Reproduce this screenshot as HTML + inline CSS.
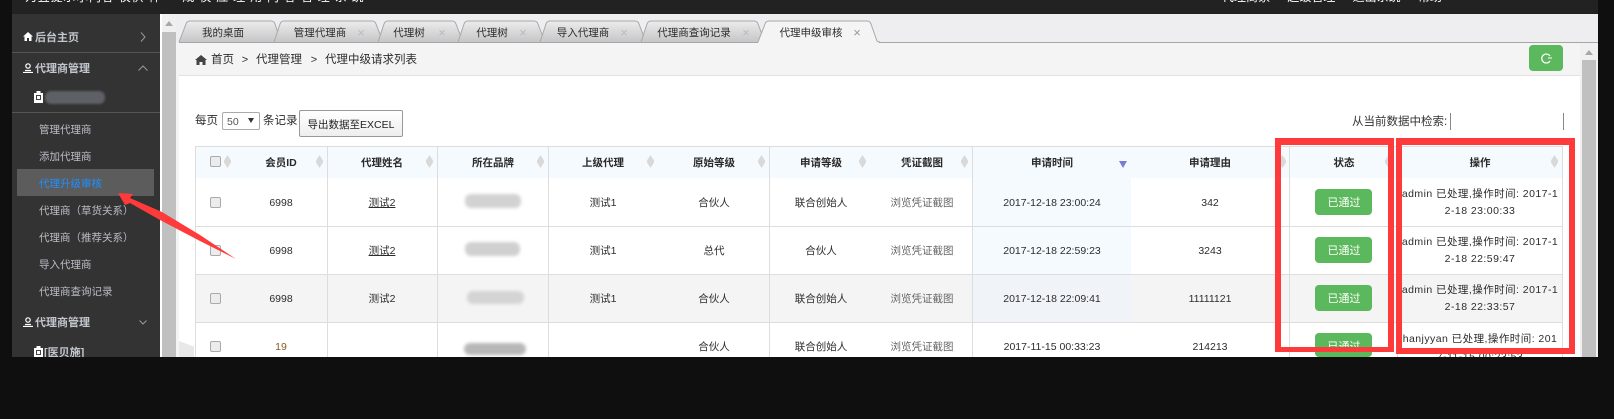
<!DOCTYPE html>
<html lang="zh"><head><meta charset="utf-8"><title>代理升级审核</title>
<style>
html,body{margin:0;padding:0;background:#0f0f0f}
body{position:relative;width:1614px;height:419px;overflow:hidden;font-family:"Liberation Sans","Noto Sans CJK SC",sans-serif;font-size:10.5px;color:#2c2c2c}
div,span,a,b{position:absolute}
.c{transform:translate(-50%,-50%);white-space:nowrap;line-height:14px;margin-top:.5px;filter:blur(.25px)}
.l{transform:translateY(-50%);white-space:nowrap;line-height:14px;margin-top:.5px;filter:blur(.25px)}
.m{color:#b9bcc4}
.h{font-weight:bold;font-size:11px;color:#c3c6ce}
.th{font-weight:bold;color:#2a2a2a;top:162px}
.s{top:155px;width:7px;height:13px;background:#d9d9d9;clip-path:polygon(50% 0,100% 42%,100% 58%,50% 100%,0 58%,0 42%)}
.cb{left:210px;width:9px;height:9px;border:1px solid #aaa;border-radius:2px;background:#ececec}
.g{width:57px;height:26px;left:1315px;background:#5cb85c;border-radius:4px}
.gt{left:1344px;color:#fff;font-size:11px}
.b{border-radius:6px;filter:blur(1.5px)}
.hl{left:195px;width:1368px;height:1px;background:#ddd}
.vl{top:146px;width:1px;height:211px;background:#ddd}
.o{left:1480px;letter-spacing:.45px;font-size:10.5px}
.rd{border-style:solid;border-color:#ff3a3a;box-sizing:border-box}
</style></head><body>
<div style="left:12px;top:0;width:1586px;height:14px;background:#222;overflow:hidden">
<span style="left:13px;top:-12px;color:#fff;font-size:12px;white-space:nowrap;letter-spacing:.8px">为宜提示尔内容 仅供 样 一 成 仅 应 理 用 内 容 管 理 系 统</span>
<span style="left:1210px;top:-12px;color:#fff;font-size:12px;white-space:nowrap;word-spacing:14px">代理商家 超级管理 退出系统 帮助</span>
</div>
<div style="left:12px;top:14px;width:148px;height:343px;background:#333"></div>
<div style="left:160px;top:14px;width:1438px;height:343px;background:#fff"></div>
<div style="left:162px;top:14px;width:14px;height:343px;background:#f0f0f0"></div>
<div style="left:162px;top:32px;width:14px;height:325px;background:#c0c0c0"></div>
<div style="left:165px;top:21px;width:0;height:0;border:4px solid transparent;border-top:0;border-bottom:5px solid #a8a8a8"></div>
<div style="left:176px;top:14px;width:3px;height:343px;background:#f4f4f4"></div>
<div style="left:179px;top:341px;width:15px;height:16px;background:#e8e8e8;clip-path:polygon(0 0,100% 35%,100% 100%,0 100%)"></div>

<!-- tabs -->
<div style="left:176px;top:14px;width:1422px;height:29px;background:#eeeef0"></div>
<svg style="position:absolute;left:0;top:0" width="1614" height="60">
<defs><linearGradient id="tg" x1="0" y1="0" x2="0" y2="1"><stop offset="0" stop-color="#ececec"/><stop offset="1" stop-color="#c6c6c8"/></linearGradient></defs>
<rect x="179" y="42" width="1419" height="1" fill="#a6a6a6"/>
<g fill="url(#tg)" stroke="#a8a8a8" stroke-width="1">
<path d="M179 42L186 24Q187 21 190 21L271 21Q274 21 275 24L281 42"/>
<path d="M274 42L280 24Q281 21 284 21L372 21Q375 21 376 24L383 42"/>
<path d="M378 42L384 24Q385 21 388 21L452 21Q455 21 456 24L463 42"/>
<path d="M458 42L464 24Q465 21 468 21L534 21Q537 21 538 24L545 42"/>
<path d="M540 42L546 24Q547 21 550 21L635 21Q638 21 639 24L646 42"/>
<path d="M641 42L647 24Q648 21 651 21L754 21Q757 21 758 24L765 42"/>
</g>
<path d="M758 43L765 24Q766 21 769 21L867 21Q870 21 871 24L879 43Z" fill="#f4f4f4"/>
<path d="M758 42L765 24Q766 21 769 21L867 21Q870 21 871 24L877 41Q878 42 880 42" fill="none" stroke="#a8a8a8"/>
</svg>
<div class="c" style="left:223px;top:32px">我的桌面</div>
<div class="c" style="left:320px;top:32px">管理代理商</div><div class="c" style="left:361px;top:32px;color:#bbb;font-size:13px">×</div>
<div class="c" style="left:409px;top:32px">代理树</div><div class="c" style="left:442px;top:32px;color:#bbb;font-size:13px">×</div>
<div class="c" style="left:492px;top:32px">代理树</div><div class="c" style="left:523px;top:32px;color:#bbb;font-size:13px">×</div>
<div class="c" style="left:583px;top:32px">导入代理商</div><div class="c" style="left:624px;top:32px;color:#bbb;font-size:13px">×</div>
<div class="c" style="left:694px;top:32px">代理商查询记录</div><div class="c" style="left:746px;top:32px;color:#bbb;font-size:13px">×</div>
<div class="c" style="left:811px;top:32px">代理申级审核</div><div class="c" style="left:857px;top:32px;color:#999;font-size:13px">×</div>

<!-- breadcrumb -->
<div style="left:179px;top:43px;width:1401px;height:32px;background:#f4f4f4"></div>
<div style="left:179px;top:75px;width:1401px;height:1px;background:#e2e2e2"></div>
<div style="left:1580px;top:43px;width:18px;height:314px;background:#f0f0f0"></div>
<div style="left:1582px;top:60px;width:14px;height:297px;background:#c0c0c0"></div>
<div style="left:1585px;top:50px;width:0;height:0;border:4px solid transparent;border-top:0;border-bottom:5px solid #a8a8a8"></div>
<svg style="position:absolute;left:195px;top:55px" width="12" height="10" viewBox="0 0 12 10"><path d="M6 0L12 5L10.500 5L10.500 10L7.500 10L7.500 7L4.500 7L4.500 10L1.500 10L1.500 5L0 5Z" fill="#444"/></svg>
<div class="l" style="left:211px;top:59px;font-size:11.500px">首页</div>
<div class="c" style="left:245px;top:59px;font-size:11px">&gt;</div>
<div class="l" style="left:256px;top:59px;font-size:11.500px">代理管理</div>
<div class="c" style="left:314px;top:59px;font-size:11px">&gt;</div>
<div class="l" style="left:325px;top:59px;font-size:11.500px">代理中级请求列表</div>
<div style="left:1529px;top:45px;width:34px;height:26px;background:#5cb85c;border-radius:4px"></div>
<svg style="position:absolute;left:1539px;top:53px" width="14" height="11" viewBox="0 0 14 11"><path d="M11 3A4.500 4.500 0 1 0 11 8" fill="none" stroke="#fff" stroke-width="1.200"/><path d="M9 5L13 5" stroke="#fff" stroke-width="1"/></svg>

<!-- toolbar -->
<div class="l" style="left:195px;top:120px;font-size:11.500px">每页</div>
<div style="left:222px;top:112px;width:36px;height:16px;border:1px solid #aaa;border-radius:2px;background:#fff"></div>
<div class="l" style="left:227px;top:121px;color:#555">50</div>
<div style="left:248px;top:118px;width:0;height:0;border:3px solid transparent;border-top:5px solid #333;border-bottom:0"></div>
<div class="l" style="left:263px;top:120px;font-size:11.500px">条记录</div>
<div style="left:299px;top:110px;width:104px;height:27px;box-sizing:border-box;border:1px solid #999;border-radius:2px;background:linear-gradient(#fff,#eee)"></div>
<div class="c" style="left:351px;top:124px;font-size:10.500px;color:#222">导出数据至EXCEL</div>
<div class="l" style="left:1352px;top:121px;font-size:11.500px;color:#333">从当前数据中检索:</div>
<div style="left:1450px;top:113px;width:1px;height:17px;background:#888"></div>
<div style="left:1563px;top:113px;width:1px;height:17px;background:#888"></div>

<!-- table -->
<div style="left:195px;top:146px;width:1368px;height:32px;background:#f5fafe"></div>
<div style="left:972px;top:178px;width:159px;height:144px;background:#f5fafe"></div>
<div style="left:195px;top:274px;width:1368px;height:48px;background:#f4f4f4"></div>
<div style="left:972px;top:274px;width:159px;height:48px;background:#f0f4f8"></div>
<div class="hl" style="top:146px"></div><div class="hl" style="top:226px"></div><div class="hl" style="top:274px"></div><div class="hl" style="top:322px"></div>
<div class="vl" style="left:195px"></div><div class="vl" style="left:327px"></div><div class="vl" style="left:437px"></div><div class="vl" style="left:548px"></div><div class="vl" style="left:769px"></div><div class="vl" style="left:972px"></div><div class="vl" style="left:1289px"></div><div class="vl" style="left:1397px"></div><div class="vl" style="left:1562px"></div>

<div class="cb" style="top:156px"></div><div class="cb" style="top:197px"></div><div class="cb" style="top:245px"></div><div class="cb" style="top:293px"></div><div class="cb" style="top:341px"></div>
<div class="s" style="left:224px"></div><div class="s" style="left:316px"></div><div class="s" style="left:426px"></div><div class="s" style="left:537px"></div><div class="s" style="left:647px"></div><div class="s" style="left:758px"></div><div class="s" style="left:859px"></div><div class="s" style="left:961px"></div><div class="s" style="left:1279px"></div><div class="s" style="left:1385px"></div><div class="s" style="left:1551px"></div>
<div style="left:1119px;top:161px;width:0;height:0;border:4px solid transparent;border-top:7px solid #7b7bd6;border-bottom:0"></div>

<div class="c th" style="left:281px">会员ID</div><div class="c th" style="left:382px">代理姓名</div><div class="c th" style="left:493px">所在品牌</div><div class="c th" style="left:603px">上级代理</div><div class="c th" style="left:714px">原始等级</div><div class="c th" style="left:821px">申请等级</div><div class="c th" style="left:922px">凭证截图</div><div class="c th" style="left:1052px">申请时间</div><div class="c th" style="left:1210px">申请理由</div><div class="c th" style="left:1344px">状态</div><div class="c th" style="left:1480px">操作</div>

<div class="c" style="left:281px;top:202px">6998</div><div class="c" style="left:382px;top:202px;text-decoration:underline">测试2</div><div class="c" style="left:603px;top:202px">测试1</div><div class="c" style="left:714px;top:202px">合伙人</div><div class="c" style="left:821px;top:202px">联合创始人</div><div class="c" style="left:922px;top:202px;color:#666">浏览凭证截图</div><div class="c" style="left:1052px;top:202px">2017-12-18 23:00:24</div><div class="c" style="left:1210px;top:202px">342</div>
<div class="c" style="left:281px;top:250px">6998</div><div class="c" style="left:382px;top:250px;text-decoration:underline">测试2</div><div class="c" style="left:603px;top:250px">测试1</div><div class="c" style="left:714px;top:250px">总代</div><div class="c" style="left:821px;top:250px">合伙人</div><div class="c" style="left:922px;top:250px;color:#666">浏览凭证截图</div><div class="c" style="left:1052px;top:250px">2017-12-18 22:59:23</div><div class="c" style="left:1210px;top:250px">3243</div>
<div class="c" style="left:281px;top:298px">6998</div><div class="c" style="left:382px;top:298px">测试2</div><div class="c" style="left:603px;top:298px">测试1</div><div class="c" style="left:714px;top:298px">合伙人</div><div class="c" style="left:821px;top:298px">联合创始人</div><div class="c" style="left:922px;top:298px;color:#666">浏览凭证截图</div><div class="c" style="left:1052px;top:298px">2017-12-18 22:09:41</div><div class="c" style="left:1210px;top:298px">11111121</div>
<div class="c" style="left:281px;top:346px;color:#8a5a1c">19</div><div class="c" style="left:714px;top:346px">合伙人</div><div class="c" style="left:821px;top:346px">联合创始人</div><div class="c" style="left:922px;top:346px;color:#666">浏览凭证截图</div><div class="c" style="left:1052px;top:346px">2017-11-15 00:33:23</div><div class="c" style="left:1210px;top:346px">214213</div>

<div class="b" style="left:465px;top:194px;width:56px;height:14px;background:#d2d2d2"></div>
<div class="b" style="left:465px;top:242px;width:55px;height:14px;background:#d0d0d0"></div>
<div class="b" style="left:467px;top:291px;width:57px;height:13px;background:#d4d4d4"></div>
<div class="b" style="left:464px;top:343px;width:62px;height:12px;background:#b8b8b8"></div>

<div class="g" style="top:189px"></div><div class="c gt" style="top:202px">已通过</div>
<div class="g" style="top:237px"></div><div class="c gt" style="top:250px">已通过</div>
<div class="g" style="top:285px"></div><div class="c gt" style="top:298px">已通过</div>
<div class="g" style="top:333px;height:24px"></div><div class="c gt" style="top:346px">已通过</div>

<div class="c o" style="top:193px">admin 已处理,操作时间: 2017-1</div><div class="c o" style="top:210px">2-18 23:00:33</div>
<div class="c o" style="top:241px">admin 已处理,操作时间: 2017-1</div><div class="c o" style="top:258px">2-18 22:59:47</div>
<div class="c o" style="top:289px">admin 已处理,操作时间: 2017-1</div><div class="c o" style="top:306px">2-18 22:33:57</div>
<div class="c o" style="top:338px">hanjyyan 已处理,操作时间: 201</div>
<div style="left:1398px;top:350px;width:164px;height:7px;overflow:hidden"><span class="c" style="left:82px;top:6px;letter-spacing:.45px">7-11-15 00:23:53</span></div>

<!-- sidebar -->
<svg style="position:absolute;left:23px;top:32px" width="10" height="9" viewBox="0 0 10 9"><path d="M5 0L10 4.500L8.500 4.500L8.500 9L6 9L6 6L4 6L4 9L1.500 9L1.500 4.500L0 4.500Z" fill="#fff"/></svg>
<div class="l h" style="left:35px;top:37px">后台主页</div>
<svg style="position:absolute;left:140px;top:32px" width="6" height="10"><path d="M1 .5L5 5L1 9.500" fill="none" stroke="#999"/></svg>
<div style="left:12px;top:52px;width:148px;height:1px;background:#555"></div>
<svg style="position:absolute;left:23px;top:63px" width="10" height="10" viewBox="0 0 10 10"><circle cx="5" cy="3" r="2.200" fill="none" stroke="#fff" stroke-width="1.200"/><path d="M0 9.500L10 9.500M2 7.500L8 7.500" stroke="#fff" stroke-width="1.200"/></svg>
<div class="l h" style="left:35px;top:68px">代理商管理</div>
<svg style="position:absolute;left:138px;top:65px" width="10" height="6"><path d="M.5 5.500L5 1L9.500 5.500" fill="none" stroke="#999"/></svg>
<svg style="position:absolute;left:34px;top:91px" width="9" height="12"><path d="M.5 2.500H8.500V11.500H.5ZM3 2.500V.5H6V2.500" fill="#fff" stroke="#fff"/><rect x="2.500" y="4.500" width="4" height="4" fill="none" stroke="#444"/></svg>
<div class="b" style="left:45px;top:91px;width:60px;height:13px;background:#5e6066;filter:blur(1px)"></div>
<div style="left:12px;top:112px;width:148px;height:1px;background:#555"></div>
<div class="l m" style="left:39px;top:129px">管理代理商</div>
<div class="l m" style="left:39px;top:156px">添加代理商</div>
<div style="left:17px;top:169px;width:137px;height:27px;background:#5c5c5c"></div>
<div class="l" style="left:39px;top:183px;color:#1e90ff">代理升级审核</div>
<div class="l m" style="left:39px;top:210px">代理商（草货关系）</div>
<div class="l m" style="left:39px;top:237px">代理商（推荐关系）</div>
<div class="l m" style="left:39px;top:264px">导入代理商</div>
<div class="l m" style="left:39px;top:291px">代理商查询记录</div>
<svg style="position:absolute;left:23px;top:317px" width="10" height="10" viewBox="0 0 10 10"><circle cx="5" cy="3" r="2.200" fill="none" stroke="#fff" stroke-width="1.200"/><path d="M0 9.500L10 9.500M2 7.500L8 7.500" stroke="#fff" stroke-width="1.200"/></svg>
<div class="l h" style="left:35px;top:322px">代理商管理</div>
<svg style="position:absolute;left:139px;top:320px" width="8" height="5"><path d="M.5 .5L4 4L7.500 .5" fill="none" stroke="#999"/></svg>
<svg style="position:absolute;left:34px;top:346px" width="9" height="12"><path d="M.5 2.500H8.500V11.500H.5ZM3 2.500V.5H6V2.500" fill="#fff" stroke="#fff"/><rect x="2.500" y="4.500" width="4" height="4" fill="none" stroke="#444"/></svg>
<div class="l h" style="left:44px;top:352px">[医贝施]</div>

<!-- annotations -->
<svg style="position:absolute;left:0;top:0" width="1614" height="419"><polygon points="118,193 133,194 130,198 162,212 200,235 236,259 200,241 160,220 130,203 125,205" fill="#ff3a3a"/></svg>
<div class="rd" style="left:1275px;top:138px;width:119px;height:214px;border-width:7px 6px 5px 6px"></div>
<div class="rd" style="left:1396px;top:138px;width:179px;height:216px;border-width:7px 6px 6px 6px"></div>
<div style="left:0;top:357px;width:1614px;height:62px;background:#0f0f0f"></div>
</body></html>
